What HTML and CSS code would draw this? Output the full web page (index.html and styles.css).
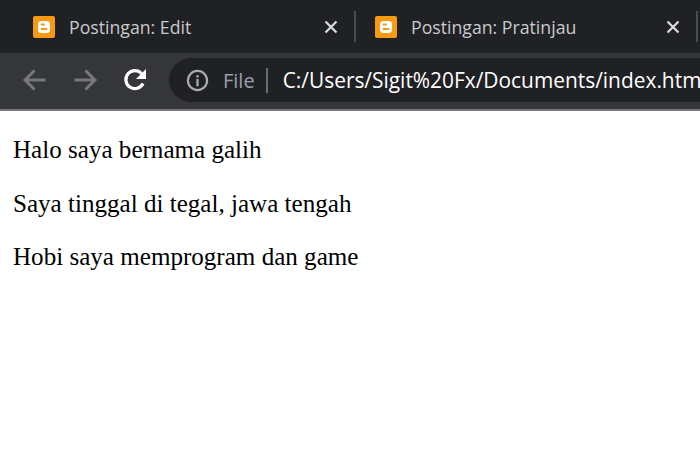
FILE: index.html
```html
<!DOCTYPE html>
<html lang="id">
<head>
<meta charset="utf-8">
<title>Postingan: Pratinjau</title>
<link rel="stylesheet" href="styles.css">
</head>
<body>
<header class="browser">
  <div class="tabstrip">
    <div class="tab">
      <svg class="favicon" viewBox="0 0 22 22"><rect width="22" height="22" rx="2" fill="#f79a13"/><rect x="5" y="5" width="12" height="12" rx="3.5" fill="#fff"/><rect x="7.5" y="7.5" width="4.5" height="2" rx="1" fill="#f79a13"/><rect x="7.5" y="12" width="7" height="2" rx="1" fill="#f79a13"/></svg>
      <span class="tab-title">Postingan: Edit</span>
      <svg class="close" viewBox="0 0 14 14"><path d="M1.5 1.5l11 11M12.5 1.5l-11 11" stroke="#dcdde0" stroke-width="2.2" fill="none"/></svg>
      <span class="tab-sep"></span>
    </div>
    <div class="tab">
      <svg class="favicon" viewBox="0 0 22 22"><rect width="22" height="22" rx="2" fill="#f79a13"/><rect x="5" y="5" width="12" height="12" rx="3.5" fill="#fff"/><rect x="7.5" y="7.5" width="4.5" height="2" rx="1" fill="#f79a13"/><rect x="7.5" y="12" width="7" height="2" rx="1" fill="#f79a13"/></svg>
      <span class="tab-title">Postingan: Pratinjau</span>
      <svg class="close" viewBox="0 0 14 14"><path d="M1.5 1.5l11 11M12.5 1.5l-11 11" stroke="#dcdde0" stroke-width="2.2" fill="none"/></svg>
      <span class="tab-sep"></span>
    </div>
  </div>
  <div class="toolbar">
    <svg class="nav nav-back" viewBox="0 0 26 26"><path d="M23.5 13H4M12.5 3.500L3 13l9.500 9.500" stroke="#77787b" stroke-width="3" fill="none"/></svg>
    <svg class="nav nav-forward" viewBox="0 0 26 26"><path d="M2.500 13H22M13.500 3.500L23 13l-9.500 9.500" stroke="#77787b" stroke-width="3" fill="none"/></svg>
    <svg class="nav nav-reload" viewBox="0 0 26 26"><path d="M21 16.500A9 9 0 1 1 19.500 6.500L21.500 9" stroke="#fff" stroke-width="3.200" fill="none"/><path d="M24 2v10H14z" fill="#fff"/></svg>
    <div class="omnibox">
      <svg class="info" viewBox="0 0 24 24"><circle cx="12" cy="12" r="10" stroke="#aaabae" stroke-width="2.300" fill="none"/><rect x="10.800" y="10.500" width="2.400" height="7.500" fill="#aaabae"/><rect x="10.800" y="6.500" width="2.400" height="2.400" fill="#aaabae"/></svg>
      <span class="scheme">File</span>
      <span class="divider"></span>
      <span class="url">C:/Users/Sigit%20Fx/Documents/index.html</span>
    </div>
  </div>
</header>
<main class="page">
  <p>Halo saya bernama galih</p>
  <p>Saya tinggal di tegal, jawa tengah</p>
  <p>Hobi saya memprogram dan game</p>
</main>
</body>
</html>
```
FILE: styles.css
```css
html, body {
  margin: 0;
  height: 100%;
  background: #fff;
  overflow: hidden;
}
.browser {
  font-family: "Open Sans", "Noto Sans", sans-serif;
}
.tabstrip {
  display: flex;
  height: 53px;
  background: #202124;
  padding-left: 14px;
}
.tab {
  width: 342px;
  height: 53px;
  box-sizing: border-box;
  display: flex;
  align-items: center;
  padding-left: 19px;
}
.favicon {
  width: 22px;
  height: 22px;
  flex: none;
}
.tab-title {
  flex: 1;
  margin-left: 14px;
  font-size: 17.700px;
  color: #c8cacd;
  white-space: nowrap;
}
.close {
  width: 14px;
  height: 14px;
  flex: none;
}
.tab-sep {
  width: 2px;
  height: 31px;
  margin-left: 16px;
  background: #4a4b4e;
  flex: none;
}
.toolbar {
  height: 58px;
  box-sizing: border-box;
  background: #35363a;
  border-bottom: 2px solid #77787a;
  display: flex;
  align-items: center;
  padding: 0 0 2px 22px;
}
.nav {
  width: 26px;
  height: 26px;
  flex: none;
}
.nav-forward { margin-left: 24px; }
.nav-reload { margin-left: 24px; }
.omnibox {
  flex: 1;
  min-width: 0;
  height: 44px;
  margin-left: 21px;
  padding-left: 17px;
  background: #202124;
  border-radius: 22px 0 0 22px;
  display: flex;
  align-items: center;
  overflow: hidden;
}
.info {
  width: 23px;
  height: 23px;
  flex: none;
}
.scheme {
  margin-left: 14px;
  font-size: 20px;
  color: #9aa0a6;
}
.divider {
  width: 2px;
  height: 25px;
  margin: 0 15px 0 11px;
  background: #6a6b6e;
  flex: none;
}
.url {
  font-size: 20.900px;
  color: #fff;
  white-space: nowrap;
}
.page {
  padding: 24px 13px 0;
  font-family: "Liberation Serif", "Times New Roman", serif;
  font-size: 25.080px;
  line-height: 30px;
  color: #000;
}
.page p {
  margin: 0 0 23.500px;
}
```
